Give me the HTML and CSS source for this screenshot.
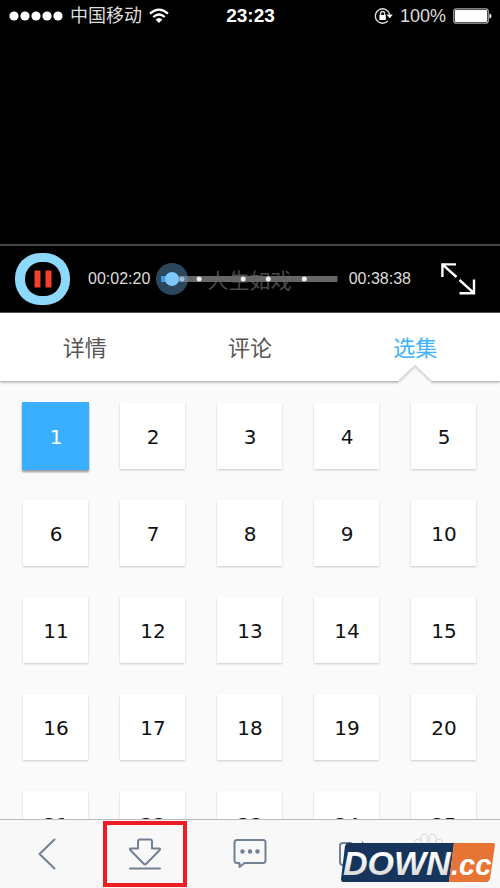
FILE: index.html
```html
<!DOCTYPE html>
<html lang="zh-CN">
<head>
<meta charset="utf-8">
<meta name="viewport" content="width=device-width, initial-scale=1">
<title>人生如戏</title>
<link rel="stylesheet" href="styles.css">
</head>
<body>
<div class="app">
  <header class="player">
    <div class="status">
      <div class="carrier">
        <svg width="54" height="10" viewBox="0 0 54 10" fill="#fff" aria-hidden="true"><circle cx="5" cy="5" r="4.6"/><circle cx="16" cy="5" r="4.6"/><circle cx="27" cy="5" r="4.6"/><circle cx="38" cy="5" r="4.6"/><circle cx="49" cy="5" r="4.6"/></svg>
        <span>中国移动</span>
        <svg width="20" height="16" viewBox="0 0 20 16" fill="none" stroke="#fff" stroke-width="2.2" aria-hidden="true"><path d="M1 5.6Q10-2.4 19 5.6M4.2 9Q10 4 15.8 9"/><path d="M6.6 11.4Q10 8.4 13.4 11.4L10 15Z" fill="#fff" stroke="none"/></svg>
      </div>
      <time class="clock">23:23</time>
      <div class="power">
        <svg width="19" height="18" viewBox="0 0 19 18" fill="none" stroke="#ddd" stroke-width="1.4" aria-hidden="true"><path d="M15.6 7.4A7.2 7.2 0 1 0 13.8 14"/><path d="M12.6 7.6h6.2l-3.1 3.6z" fill="#fff" stroke="none"/><path d="M5.4 8h6.4v5H5.4z" fill="#fff" stroke="none"/><path d="M6.6 8V6.500a2 2 0 0 1 4 0V8"/></svg>
        <span>100%</span>
        <svg width="39" height="16" viewBox="0 0 39 16" aria-hidden="true"><rect x=".8" y=".8" width="34.400" height="14.400" rx="2.500" fill="none" stroke="#aaa" stroke-width="1.300"/><rect x="2" y="2" width="32" height="12" rx="1" fill="#fff"/><path d="M36.500 5.500q2 .5 2 2.500t-2 2.500z" fill="#fff"/></svg>
      </div>
    </div>
    <div class="screen"></div>
    <div class="controls">
      <button class="pause" aria-label="暂停"><svg width="36" height="34" viewBox="0 0 36 34"><rect width="36" height="34" rx="16.500" fill="#000"/><path d="M9.500 8.500h6v17h-6zM20.500 8.500h6v17h-6z" fill="#f2402b"/></svg></button>
      <span class="elapsed">00:02:20</span>
      <div class="seek">
        <span class="title">人生如戏</span>
        <svg class="track" viewBox="0 0 176 6" preserveAspectRatio="none" aria-hidden="true"><path d="M0 0h176v6H0z" fill="#666"/><path d="M0 0h10v6H0z" fill="#2fa8ff"/><g fill="#eee"><circle cx="21" cy="3" r="2.500"/><circle cx="38" cy="3" r="2.500"/><circle cx="82" cy="3" r="2.500"/><circle cx="107" cy="3" r="2.500"/><circle cx="143" cy="3" r="2.500"/></g></svg>
        <input type="range" min="0" max="100" value="2" aria-label="播放进度">
      </div>
      <span class="total">00:38:38</span>
      <button class="expand" aria-label="全屏"><svg width="36" height="34" viewBox="0 0 36 34" fill="none" stroke="#fff" stroke-width="2.400"><path d="M2.400 15V2.400H16M2.400 2.400L16.500 15M19.500 18L34 31.200M34 17.500V31.200H19.500"/></svg></button>
    </div>
  </header>

  <nav class="tabs">
    <a href="#detail">详情</a>
    <a href="#comments">评论</a>
    <a href="#episodes" class="active">选集
      <svg class="notch" width="36" height="20" viewBox="0 0 36 20" aria-hidden="true"><path d="M2 16L18 0L34 16V20H2Z" fill="#fafafa"/><path d="M2 17L18 2L34 17" fill="none" stroke="#ececec" stroke-width="3"/><path d="M2 16L18 1L34 16" fill="none" stroke="#d6d6d6" stroke-width="1.500"/></svg>
    </a>
  </nav>

  <main class="episodes" id="episodes">
    <button class="current">1</button><button>2</button><button>3</button><button>4</button><button>5</button>
    <button>6</button><button>7</button><button>8</button><button>9</button><button>10</button>
    <button>11</button><button>12</button><button>13</button><button>14</button><button>15</button>
    <button>16</button><button>17</button><button>18</button><button>19</button><button>20</button>
    <button>21</button><button>22</button><button>23</button><button>24</button><button>25</button>
  </main>

  <footer class="toolbar">
    <button aria-label="返回"><svg width="18" height="32" viewBox="0 0 18 32"><path d="M16.500 1.500L1.500 16L16.500 30.500"/></svg></button>
    <button class="marked" aria-label="下载"><svg width="34" height="34" viewBox="0 0 34 34"><path d="M10 4.500Q10 2.500 12 2.500H22Q24 2.500 24 4.500V11.500H31Q33 11.500 31.500 13.300L18.300 26.700Q17 28 15.700 26.700L2.500 13.300Q1 11.500 3 11.500H10ZM2 31.500H32"/></svg></button>
    <button aria-label="评论"><svg width="34" height="32" viewBox="0 0 34 32"><path d="M4 2H30Q32.500 2 32.500 4.500V22.500Q32.500 25 30 25H11.500L6.500 29V25H4Q1.500 25 1.500 22.500V4.500Q1.500 2 4 2Z"/><g class="dots"><circle cx="9.500" cy="13.500" r="2.200"/><circle cx="17" cy="13.500" r="2.200"/><circle cx="24.500" cy="13.500" r="2.200"/></g></svg></button>
    <button aria-label="分享"><svg width="30" height="28" viewBox="0 0 30 28"><path d="M13 3H5Q2 3 2 6V22Q2 25 5 25H21Q24 25 24 22V18M10 16Q12 6 24 6"/><path class="dots" d="M24 1L30 7L24 12Z"/></svg></button>
    <button aria-label="百度"></button>
    <svg class="brand" width="156" height="52" viewBox="0 0 156 52" role="img" aria-label="DOWN.cc">
      <defs><linearGradient id="silver" x1="0" y1="0" x2="0" y2="1"><stop offset=".3" stop-color="#fff"/><stop offset="1" stop-color="#cfcfcf"/></linearGradient></defs>
      <g fill="#f8f8f8" stroke="#dedede" stroke-width="1.300"><ellipse cx="78" cy="12" rx="3.500" ry="5"/><ellipse cx="99" cy="12" rx="3.500" ry="5"/><ellipse cx="84.500" cy="7" rx="3.500" ry="5"/><ellipse cx="92.500" cy="7" rx="3.500" ry="5"/></g>
      <path d="M8 11H114L109 50H3Q1 50 1 47L5 14Q6 11 8 11Z" fill="#17355b"/>
      <path d="M114 11H153Q155 11 155 13L150 47Q149 50 147 50H109Z" fill="#e67535"/>
      <text class="word" x="3" y="43">DOWN</text><text class="suffix" x="111" y="43">.cc</text>
    </svg>
  </footer>
</div>
</body>
</html>
```
FILE: styles.css
```css
* { box-sizing: border-box; }
body {
  margin: 0;
  font-family: "Liberation Sans", "Noto Sans CJK SC", sans-serif;
  background: #fafafa;
}
button {
  border: 0;
  padding: 0;
  background: none;
  font: inherit;
  cursor: pointer;
}
svg { display: block; flex: none; }
.app {
  display: flex;
  flex-direction: column;
  height: 100vh;
}
.player {
  flex: none;
  background: #000;
  color: #ddd;
}
.status {
  display: grid;
  grid-template-columns: 1fr auto 1fr;
  align-items: center;
  height: 32px;
  padding: 0 8px 0 9px;
  font-size: 18px;
  line-height: 24px;
}
.carrier, .power {
  display: flex;
  align-items: center;
  gap: 7px;
}
.power { justify-content: flex-end; }
.clock {
  color: #fff;
  font-size: 19px;
  font-weight: bold;
}
.screen { height: 212px; }
.controls {
  display: flex;
  align-items: center;
  height: 69px;
  padding: 0 24px 0 15px;
  border-top: 2px solid #444;
  border-bottom: 1px solid #555;
  font-size: 16px;
}
.pause {
  display: grid;
  place-items: center;
  width: 55px;
  height: 52px;
  border-radius: 25px;
  background: #8dd9fb;
}
.elapsed { margin: 0 11px 0 18px; }
.total { margin: 0 29px 0 11px; }
.seek {
  position: relative;
  flex: 1;
  display: flex;
  align-items: center;
  height: 32px;
}
.title {
  position: absolute;
  top: 4px;
  left: 0;
  right: 0;
  text-align: center;
  color: #484848;
  font-size: 21px;
  line-height: 28px;
}
.track {
  position: relative;
  width: 100%;
  height: 6px;
}
.seek input {
  position: absolute;
  inset: 0;
  width: 100%;
  height: 32px;
  margin: 0;
  appearance: none;
  background: transparent;
}
.seek input::-webkit-slider-thumb {
  appearance: none;
  width: 14px;
  height: 14px;
  border-radius: 50%;
  background: #7dc6ff;
  box-shadow: 0 0 0 9px rgba(83, 142, 187, .5);
}
.tabs {
  position: relative;
  flex: none;
  display: flex;
  height: 68px;
  padding: 0 2px;
  background: #fff;
  box-shadow: 0 1px 3px rgba(0, 0, 0, .4);
}
.tabs a {
  position: relative;
  flex: 1;
  color: #555;
  font-size: 22px;
  line-height: 72px;
  text-align: center;
  text-decoration: none;
}
.tabs .active { color: #3db3fc; }
.notch {
  position: absolute;
  bottom: -4px;
  left: calc(50% - 18px);
}
.episodes {
  flex: 1;
  min-height: 0;
  overflow: hidden;
  display: grid;
  grid-template-columns: repeat(5, 1fr);
  grid-auto-rows: 66px;
  gap: 31px 32px;
  padding: 22px 24px 0 23px;
}
.episodes button {
  background: #fff;
  box-shadow: 0 1px 2px rgba(0, 0, 0, .2);
  color: #111;
  font-family: "DejaVu Sans", sans-serif;
  font-size: 20px;
  padding: 2px 0 0 1px;
}
.episodes .current {
  background: #3aafff;
  color: #fff;
  box-shadow: 0 0 0 1px #3aafff, 0 2px 2px 1px rgba(0, 0, 0, .4);
}
.toolbar {
  position: relative;
  flex: none;
  display: grid;
  grid-template-columns: 94fr 102fr 108fr 98fr 98fr;
  height: 69px;
  border-top: 1px solid #bbb;
  background: #f8f8f8;
}
.toolbar button {
  display: grid;
  place-items: center;
}
.toolbar button svg {
  fill: none;
  stroke: #718093;
  stroke-width: 2;
  stroke-linejoin: round;
  stroke-linecap: round;
}
.toolbar .dots { fill: #718093; stroke: none; }
.toolbar .marked {
  justify-self: center;
  align-self: center;
  width: 84px;
  height: 66px;
  border: 4px solid #ee1c25;
}
.brand {
  position: absolute;
  right: 4px;
  bottom: 4px;
}
.brand text {
  font-family: "Liberation Sans", sans-serif;
  font-weight: bold;
  font-style: italic;
}
.brand .word { font-size: 34px; fill: url(#silver); }
.brand .suffix { font-size: 29px; fill: #fff; }
```
